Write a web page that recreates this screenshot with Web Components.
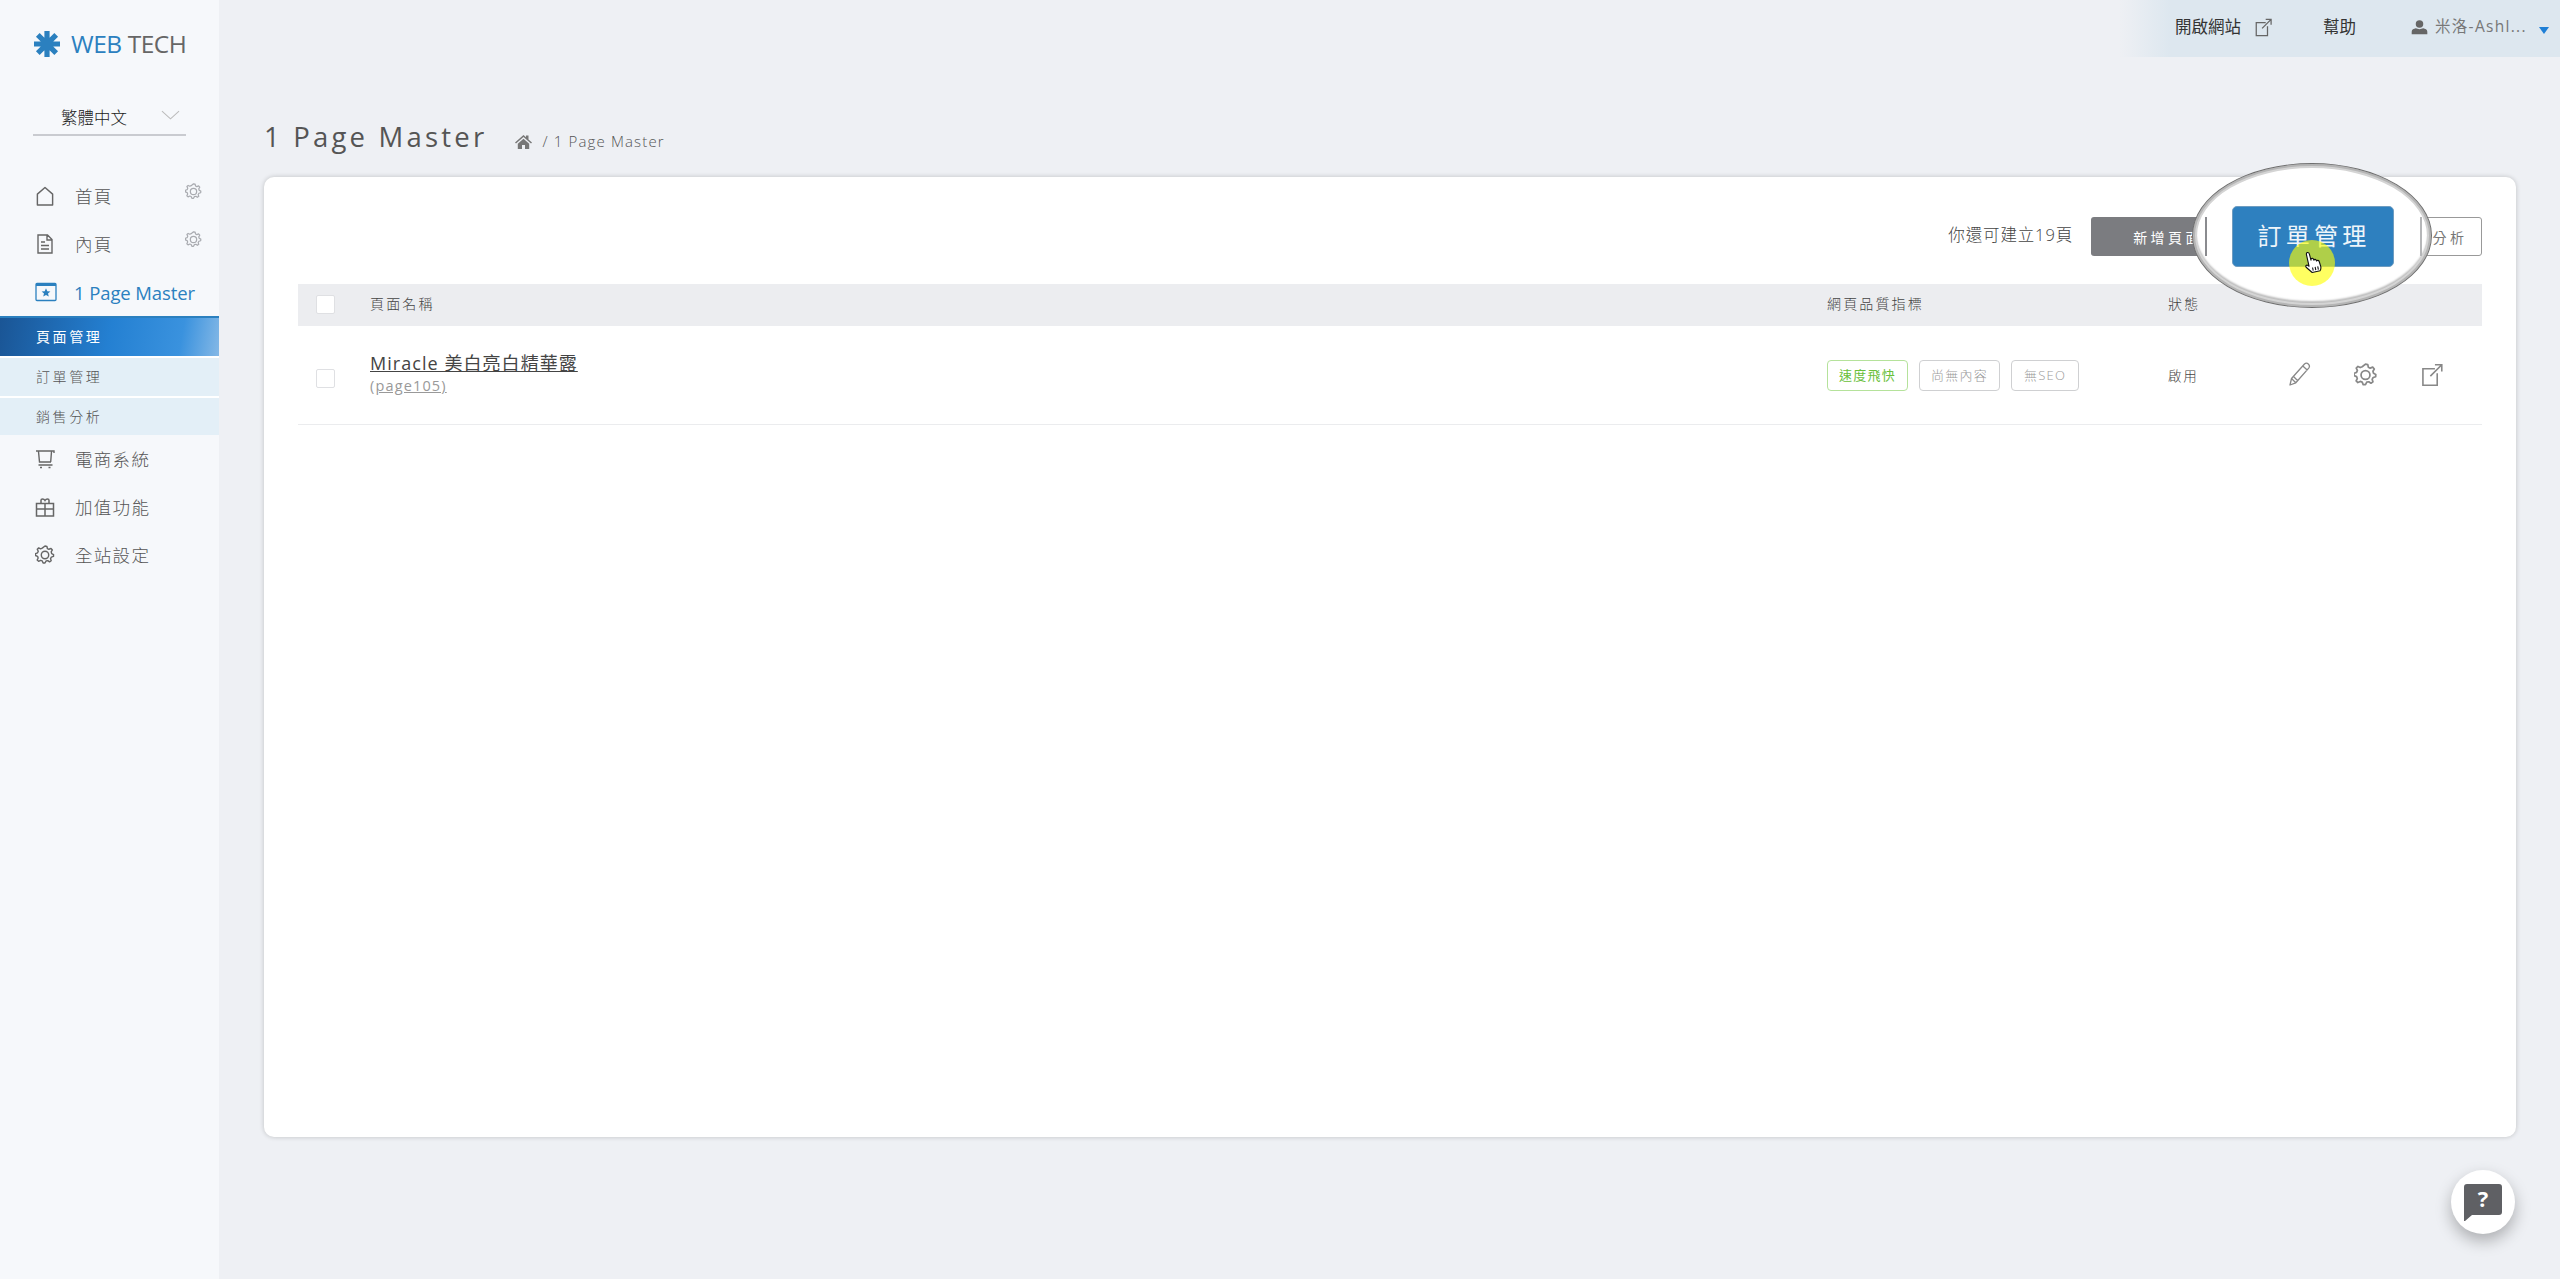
<!DOCTYPE html>
<html lang="zh-Hant">
<head>
<meta charset="utf-8">
<title>1 Page Master</title>
<style>
html,body{margin:0;padding:0;height:100%;}
body{font-family:"Open Sans","Noto Sans CJK TC",sans-serif;color:#555;background:#eef0f4;overflow:hidden;}
</style>
</head>
<body>
<app-shell>
  <side-nav slot="side"></side-nav>
  <top-bar slot="top"></top-bar>
  <page-header slot="main" heading="1 Page Master"></page-header>
  <page-card slot="main"></page-card>
  <help-fab slot="fab"></help-fab>
</app-shell>
<script>
const FONT = '"Open Sans","Noto Sans CJK TC",sans-serif';
const ICONS = {
  home:'<path d="M2 8.500 10 1.500l8 7V20H2z" fill="none" stroke="currentColor" stroke-width="1.500" stroke-linejoin="round"/>',
  doc:'<path d="M3 1h9.500L17 5.500V19H3z M12 1V6h5 M6 8h4 M6 11.500h8 M6 15h8" fill="none" stroke="currentColor" stroke-width="1.400"/>',
  page:'<rect x="1" y="1.500" width="20" height="17" rx="1" fill="none" stroke="currentColor" stroke-width="1.300"/><rect x="1" y="1.500" width="20" height="2.500" fill="currentColor"/><path d="M11 6.300l1.300 2.900 3.100.3-2.400 2 .8 3.100L11 13l-2.800 1.600.8-3.100-2.400-2 3.100-.3z" fill="currentColor"/>',
  cart:'<path d="M1 2h18v2 M3.500 2.500l1 10.500h11.500 M16.500 2.500l-.8 10.500 M3.500 16h14" fill="none" stroke="currentColor" stroke-width="1.400"/><path d="M5 18.500h2 M13.500 18.500h2" stroke="currentColor" stroke-width="1.400"/>',
  gift:'<path d="M1.500 6.500h17V19h-17z M1.500 12h17 M10 6.500V19 M6 6.500V3.300c0-1.800 2.800-2 4 .2 1.200-2.200 4-2 4-.2v3.200" fill="none" stroke="currentColor" stroke-width="1.500"/>',
  gear:'<path d="M10 1.500l2 .4.500 2.300 1.600.8 2.200-.9 1.400 1.600-1.200 2 .5 1.800 2 1-.1 2-2.200.7-.9 1.600.7 2.200-1.700 1.200-1.900-1.300-1.800.4-1.100 2.100h-2l-.9-2.200-1.700-.6-2.100 1-1.500-1.400 1-2.100-.6-1.700-2.200-.9v-2l2.200-.8.700-1.700-1-2.100 1.500-1.400 2 1 1.700-.7z" transform="translate(0,-.5)" fill="none" stroke="currentColor" stroke-width="1.500" stroke-linejoin="round"/><circle cx="10" cy="10.500" r="3.900" fill="none" stroke="currentColor" stroke-width="1.500"/>',
  ext:'<path d="M13 5H2.500v14.500H15V9 M9 11.500 19 1.500 M13 1.500h6v6" fill="none" stroke="currentColor" stroke-width="1.400"/>',
  pencil:'<path d="M2 23l1.500-6.500L16.500 2c1.300-1.200 2.800-1 4 .2 1.100 1.200 1.200 2.700.2 3.900L7.800 20.800z M14.800 4l4.400 4 M3.500 16.500 7.800 20.800 M5.500 14.500l4 4" fill="none" stroke="currentColor" stroke-width="1.300" stroke-linejoin="round"/>',
  user:'<circle cx="12.500" cy="6" r="5.500" fill="currentColor"/><path d="M1 21v-3.500c0-3 3-4.500 6-5 3 1.600 8 1.600 11 0 3 .5 6 2 6 5V21z" fill="currentColor"/>',
  house:'<path d="M0 9.500 8.500 2 11 4.200V2.500h2.500v3.900L17 9.500l-1 1-7.500-6.600L1 10.500z M2.800 10.800 8.500 5.800l5.700 5V16H10v-4H7v4H2.800z" fill="currentColor"/>',
  chev:'<path d="M1 1l9 8 9-8" fill="none" stroke="currentColor" stroke-width="1.100"/>',
  hand:'<path d="M5.200 1.200c.8 0 1.400.6 1.500 1.500l.3 6.200.4-1.300c.9-.5 2 0 2.100.9l.1 1c.6-.9 2-.6 2.200.4l.1.900c.7-.8 2.200-.4 2.400.7l.5 5c0 1.600-.5 3-1.500 4H5.700L1.100 14.500c-.6-1.200.6-2.300 1.800-1.500l1.100 1.100-.1-11c0-1.300.5-1.900 1.300-1.900z M7 16v3 M9.500 16v3 M12 16v3" fill="#fff" stroke="#111" stroke-width="1.050" stroke-linejoin="round"/>'
};
const VB = {home:'0 0 20 21',doc:'0 0 20 20',page:'0 0 22 20',cart:'0 0 20 20',gift:'0 0 20 20',gear:'0 0 20 21',ext:'0 0 20 21',pencil:'0 0 24 25',user:'0 0 25 21',house:'0 0 17 16',chev:'0 0 20 10',hand:'0 0 17 22'};

class UiIcon extends HTMLElement{
  connectedCallback(){
    if(this.shadowRoot) return;
    const n=this.getAttribute('name');
    const s=this.getAttribute('size')||20;
    const h=this.getAttribute('h')||s;
    this.attachShadow({mode:'open'}).innerHTML=`<style>:host{display:inline-flex;flex:none;line-height:0}</style><svg width="${s}" height="${h}" viewBox="${VB[n]}">${ICONS[n]}</svg>`;
  }
}
customElements.define('ui-icon',UiIcon);

class AppShell extends HTMLElement{
  constructor(){super();this.attachShadow({mode:'open'}).innerHTML=`<style>
    :host{display:grid;grid-template-columns:219px 1fr;height:1279px;width:2560px;position:relative;background:#eef0f4;}
    .main{display:flex;flex-direction:column;min-width:0;}
    .body{padding:0 44px 0 45px;display:flex;flex-direction:column;}
    .fab{position:absolute;left:2451px;top:1170px;}
  </style>
  <slot name="side"></slot>
  <div class="main"><slot name="top"></slot><div class="body"><slot name="main"></slot></div></div>
  <div class="fab"><slot name="fab"></slot></div>`;}
}
customElements.define('app-shell',AppShell);

class BrandLogo extends HTMLElement{
  constructor(){super();this.attachShadow({mode:'open'}).innerHTML=`<style>
    :host{display:flex;align-items:center;gap:11px;height:44px;font:500 24.500px/1 ${FONT};letter-spacing:-.45px;}
    b{font-weight:500;color:#2b80bf}span{color:#666}
  </style>
  <svg width="26" height="26" viewBox="0 0 26 26"><g stroke="#2b80bf" stroke-width="5.200"><path d="M13 0v26M0 13h26M3.800 3.800l18.400 18.400M22.200 3.800 3.800 22.200"/></g></svg>
  <div><b>WEB</b> <span>TECH</span></div>`;}
}
customElements.define('brand-logo',BrandLogo);

class LangSelect extends HTMLElement{
  constructor(){super();this.attachShadow({mode:'open'}).innerHTML=`<style>
    :host{display:flex;align-items:center;height:36px;box-sizing:border-box;margin:0 33px;padding:0 6px 0 28px;border-bottom:2px solid #c9cbd0;font:300 16.500px/1 ${FONT};color:#222;justify-content:space-between;}
    ui-icon{color:#bbb;margin-top:-4px}
    span{margin-top:2px}
  </style><span>繁體中文</span><ui-icon name="chev" size="19" h="10"></ui-icon>`;}
}
customElements.define('lang-select',LangSelect);

class NavItem extends HTMLElement{
  connectedCallback(){
    if(this.shadowRoot) return;
    const ic=this.getAttribute('icon');
    const gear=this.hasAttribute('gear');
    const sz=this.getAttribute('isize')||20;
    this.attachShadow({mode:'open'}).innerHTML=`<style>
      :host{display:flex;align-items:center;height:48px;padding-left:35px;position:relative;font:300 17.500px/1 ${FONT};letter-spacing:1.300px;color:#555;}
      :host([active]){color:#2b80bf;letter-spacing:-.1px;font-size:18.500px;font-weight:500;}
      .ic{width:40px;display:flex;color:#666}
      :host([active]) .ic{color:#2b80bf;width:39px}
      .lb{margin-top:2px}
      .g{position:absolute;left:185px;top:11px;color:#a9abb0}
    </style><div class="ic"><ui-icon name="${ic}" size="${sz}"></ui-icon></div><div class="lb"><slot></slot></div>${gear?'<ui-icon class="g" name="gear" size="17"></ui-icon>':''}`;
  }
}
customElements.define('nav-item',NavItem);

class SubItem extends HTMLElement{
  constructor(){super();this.attachShadow({mode:'open'}).innerHTML=`<style>
    :host{display:flex;align-items:center;height:38px;box-sizing:border-box;padding-left:36px;background:#e3eff7;color:#555;font:300 14px/1 ${FONT};letter-spacing:2.600px;}
    :host([active]){height:40px;border-top:2px solid #2b80bf;color:#fff;font-weight:400;background:linear-gradient(100deg,#1a5595 0%,#2480d2 50%,#3a92de 82%,#84b8e6 100%);}
    :host(:last-child){height:37px}
  </style><slot></slot>`;}
}
customElements.define('sub-item',SubItem);

class SideNav extends HTMLElement{
  constructor(){super();this.attachShadow({mode:'open'}).innerHTML=`<style>
    :host{display:block;background:#f6f8fb;height:1279px;}
    brand-logo{margin:22px 0 0 34px}
    lang-select{margin-top:34px}
    nav{margin-top:36px;display:flex;flex-direction:column}
    .sub{display:flex;flex-direction:column;gap:2px;background:#fff}
  </style>
  <brand-logo></brand-logo>
  <lang-select></lang-select>
  <nav>
    <nav-item icon="home" gear>首頁</nav-item>
    <nav-item icon="doc" gear>內頁</nav-item>
    <nav-item icon="page" isize="22" active>1 Page Master</nav-item>
    <div class="sub">
      <sub-item active>頁面管理</sub-item>
      <sub-item>訂單管理</sub-item>
      <sub-item>銷售分析</sub-item>
    </div>
    <nav-item icon="cart">電商系統</nav-item>
    <nav-item icon="gift">加值功能</nav-item>
    <nav-item icon="gear" isize="20">全站設定</nav-item>
  </nav>`;}
}
customElements.define('side-nav',SideNav);

class TopBar extends HTMLElement{
  constructor(){super();this.attachShadow({mode:'open'}).innerHTML=`<style>
    :host{display:flex;justify-content:flex-end;height:57px;}
    .bar{display:flex;align-items:center;height:57px;width:440px;box-sizing:border-box;padding-left:55px;background:linear-gradient(90deg,rgba(221,231,239,0) 0,#dde7ef 50px);font:400 16.500px/1 ${FONT};color:#333;}
    .bar>*{flex:none}
    .ext{color:#666;margin-left:13px}
    .help{margin-left:51px}
    .usr{color:#666;margin-left:55px}
    .name{color:#777;font-size:15.500px;letter-spacing:1.300px;width:88px;white-space:nowrap;margin-top:-3px;margin-left:7px}
    .tri{margin-left:16px;width:0;height:0;border:5px solid transparent;border-top:7px solid #1e7fd6;border-bottom:0;margin-top:4px}
    .usr,.help,.open,.ext{margin-top:-3px}
  </style>
  <div class="bar">
    <span class="open">開啟網站</span><ui-icon class="ext" name="ext" size="18" h="19"></ui-icon>
    <span class="help">幫助</span>
    <ui-icon class="usr" name="user" size="17" h="16"></ui-icon><span class="name">米洛-Ashl...</span>
    <span class="tri"></span>
  </div>`;}
}
customElements.define('top-bar',TopBar);

class PageHeader extends HTMLElement{
  connectedCallback(){
    if(this.shadowRoot) return;
    const h=this.getAttribute('heading');
    this.attachShadow({mode:'open'}).innerHTML=`<style>
      :host{display:flex;align-items:center;height:120px;box-sizing:border-box;padding:38px 0 0 0;color:#555;font-family:${FONT};}
      h1{margin:0;font:400 27.500px/1.200 ${FONT};letter-spacing:3.200px;}
      .crumb{display:flex;align-items:center;margin:9px 0 0 28px;font-size:15px;font-weight:300;letter-spacing:1.150px;color:#555;}
      .crumb span{margin-left:10px}
      ui-icon{color:#777}
    </style><h1>${h}</h1><div class="crumb"><ui-icon name="house" size="17" h="16"></ui-icon><span>/ 1 Page Master</span></div>`;
  }
}
customElements.define('page-header',PageHeader);

class QualityBadge extends HTMLElement{
  constructor(){super();this.attachShadow({mode:'open'}).innerHTML=`<style>
    :host{display:inline-flex;align-items:center;justify-content:center;height:31px;box-sizing:border-box;border:1px solid #cfd0d2;border-radius:4px;padding:0 11px;color:#999;font:300 13px/1 ${FONT};letter-spacing:1.250px;white-space:nowrap;}
    :host([good]){border-color:#b5e29b;color:#69c03a;font-weight:400}
    :host([wide]){padding:0 12px}
  </style><slot></slot>`;}
}
customElements.define('quality-badge',QualityBadge);

class TickBox extends HTMLElement{
  constructor(){super();this.attachShadow({mode:'open'}).innerHTML=`<style>
    :host{display:block;width:19px;height:19px;box-sizing:border-box;background:#fff;border:1px solid #dfe0e3;border-radius:2px;margin-left:18px;}
  </style>`;}
}
customElements.define('tick-box',TickBox);

class PageRow extends HTMLElement{
  constructor(){super();this.attachShadow({mode:'open'}).innerHTML=`<style>
    :host{display:grid;grid-template-columns:72px 1457px 341px 1fr;align-items:center;height:99px;box-sizing:border-box;border-bottom:1px solid #ebecee;font-family:${FONT};}
    tick-box{margin-top:6px}
    .t{font-size:18px;line-height:22px;letter-spacing:1.050px;color:#444;text-decoration:underline;}
    .s{font-size:14.500px;line-height:18px;letter-spacing:1.150px;color:#999;text-decoration:underline;margin-top:3px}
    .name{margin-top:-4px}
    .q{display:flex;gap:11px;margin-top:0}
    .last{display:flex;align-items:center;margin-top:-1px}
    .st{width:119px;font-size:13.500px;font-weight:300;letter-spacing:1.700px;color:#444;}
    .act{display:flex;align-items:center;color:#888;}
    .act ui-icon:first-child{margin-right:41px}
    .act ui-icon:nth-child(2){margin-right:43px}
  </style>
  <tick-box></tick-box>
  <div class="name"><div class="t">Miracle 美白亮白精華露</div><div class="s">(page105)</div></div>
  <div class="q"><quality-badge good>速度飛快</quality-badge><quality-badge>尚無內容</quality-badge><quality-badge wide>無SEO</quality-badge></div>
  <div class="last"><div class="st">啟用</div>
  <div class="act"><ui-icon name="pencil" size="26" h="25"></ui-icon><ui-icon name="gear" size="23" h="24"></ui-icon><ui-icon name="ext" size="23" h="24"></ui-icon></div></div>`;}
}
customElements.define('page-row',PageRow);

class ZoomCallout extends HTMLElement{
  constructor(){super();this.attachShadow({mode:'open'}).innerHTML=`<style>
    :host{position:absolute;left:1928px;top:-14px;width:240px;height:145px;box-sizing:border-box;display:flex;align-items:center;justify-content:center;border-radius:50%;background:#fff;border:1px solid #6f6f6f;box-shadow:inset 0 0 0 2px #b5b5b5,inset 0 0 0 4px #d4d4d4,inset 0 -3px 2px 3px #bcbcbc;overflow:hidden;}
    .edge{position:absolute;top:53px;height:39px;width:2px;background:#8a8b8f}
    .btn{width:162px;height:61px;box-sizing:border-box;border:1px solid #6e9cc0;border-radius:5px;background:#2e80bf;color:#eef5fa;font:400 24px/1 ${FONT};letter-spacing:4.200px;text-indent:3px;text-align:center;display:flex;align-items:center;justify-content:center;margin:1px 0 0 1px;}
    .dot{position:absolute;left:96px;top:76px;width:46px;height:46px;border-radius:50%;background:rgba(255,255,0,.62);}
    ui-icon{position:absolute;left:111px;top:86px;transform:rotate(-12deg)}
  </style>
  <i class="edge" style="left:12px"></i><i class="edge" style="left:227px;background:#b5b6b8"></i>
  <div class="btn">訂單管理</div><div class="dot"></div><ui-icon name="hand" size="18" h="24"></ui-icon>`;}
}
customElements.define('zoom-callout',ZoomCallout);

class PageCard extends HTMLElement{
  constructor(){super();this.attachShadow({mode:'open'}).innerHTML=`<style>
    :host{display:block;position:relative;height:960px;box-sizing:border-box;background:#fff;border-radius:10px;padding:40px 34px 0;box-shadow:0 0 5px rgba(0,0,0,.2);font-family:${FONT};}
    .tools{display:flex;align-items:center;justify-content:flex-end;height:39px;margin-bottom:28px}
    .note{font-size:16.500px;letter-spacing:.85px;font-weight:300;color:#444;margin-right:18px;margin-top:-6px}
    .b{height:39px;box-sizing:border-box;display:flex;align-items:center;justify-content:center;font-size:14px;letter-spacing:3.400px;border-radius:3px}
    .add{width:154px;background:#7b7c80;color:#fff;margin-right:133px}
    .sale{width:104px;border:1px solid #999;color:#777;background:#fff;text-indent:5px}
    .head{display:grid;grid-template-columns:72px 1457px 341px 1fr;align-items:center;height:42px;background:#ecedf0;font-size:14px;font-weight:300;letter-spacing:2.150px;color:#444}
    .head span{margin-top:-4px}
    .head tick-box{margin-top:-1px}
  </style>
  <div class="tools"><span class="note">你還可建立19頁</span><div class="b add">新增頁面</div><div class="b sale">銷售分析</div></div>
  <div class="head"><tick-box></tick-box><span>頁面名稱</span><span>網頁品質指標</span><span>狀態</span></div>
  <page-row></page-row>
  <zoom-callout></zoom-callout>`;}
}
customElements.define('page-card',PageCard);

class HelpFab extends HTMLElement{
  constructor(){super();this.attachShadow({mode:'open'}).innerHTML=`<style>
    :host{display:flex;align-items:center;justify-content:center;width:64px;height:64px;border-radius:50%;background:#fff;box-shadow:0 7px 16px rgba(0,0,0,.28);position:relative;}
    svg{display:block;margin-top:1px}
    span{position:absolute;left:0;right:0;top:17px;text-align:center;color:#fff;font:700 22px/1 "Open Sans",sans-serif;}
  </style><svg width="38" height="38" viewBox="0 0 38 38"><path d="M3 0h32a3 3 0 0 1 3 3v25a3 3 0 0 1-3 3H8l-7 6H0V3a3 3 0 0 1 3-3z" fill="#5f6064"/></svg><span>?</span>`;}
}
customElements.define('help-fab',HelpFab);
</script>
</body>
</html>
